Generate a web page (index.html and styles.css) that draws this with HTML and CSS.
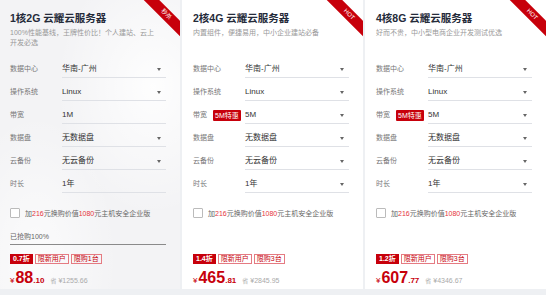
FILE: index.html
```html
<!DOCTYPE html>
<html lang="zh-CN">
<head>
    <meta charset="UTF-8" />
    <meta name="viewport" content="width=device-width, initial-scale=1.0"/>
    <title>云耀云服务器</title>
    <link rel="stylesheet" href="styles.css">
</head>
<body>
    <div class="cards">
        <!-- 1核2G -->
        <div class="card card-first">
            <div class="ribbon">秒杀</div>
            <div class="head">
                <div class="title">1核2G 云耀云服务器</div>
                <div class="sub">100%性能基线，王牌性价比！个人建站、云上开发必选</div>
            </div>
            <div class="rows">
                <div class="row"><span class="label">数据中心</span><span class="field">华南-广州<i class="arrow"></i></span></div>
                <div class="row"><span class="label">操作系统</span><span class="field">Linux<i class="arrow"></i></span></div>
                <div class="row"><span class="label">带宽</span><span class="field">1M</span></div>
                <div class="row"><span class="label">数据盘</span><span class="field">无数据盘<i class="arrow"></i></span></div>
                <div class="row"><span class="label">云备份</span><span class="field">无云备份<i class="arrow"></i></span></div>
                <div class="row"><span class="label">时长</span><span class="field">1年</span></div>
            </div>
            <div class="addon"><span class="check"></span>加<em>216</em>元换购价值<em>1080</em>元主机安全企业版</div>
            <div class="progress">已抢购100%</div>
            <div class="tags">
                <span class="tag tag-off">0.7折</span>
                <span class="tag">限新用户</span>
                <span class="tag">限购1台</span>
            </div>
            <div class="price">
                <span class="yen">¥</span><span class="big">88</span><span class="cents">.10</span>
                <span class="save">省</span><span class="orig">¥1255.66</span>
            </div>
        </div>

        <!-- 2核4G -->
        <div class="card">
            <div class="ribbon">HOT</div>
            <div class="head">
                <div class="title">2核4G 云耀云服务器</div>
                <div class="sub">内置组件，便捷易用，中小企业建站必备</div>
            </div>
            <div class="rows">
                <div class="row"><span class="label">数据中心</span><span class="field">华南-广州<i class="arrow"></i></span></div>
                <div class="row"><span class="label">操作系统</span><span class="field">Linux<i class="arrow"></i></span></div>
                <div class="row"><span class="label">带宽<b class="badge">5M特惠</b></span><span class="field">5M<i class="arrow"></i></span></div>
                <div class="row"><span class="label">数据盘</span><span class="field">无数据盘<i class="arrow"></i></span></div>
                <div class="row"><span class="label">云备份</span><span class="field">无云备份<i class="arrow"></i></span></div>
                <div class="row"><span class="label">时长</span><span class="field">1年<i class="arrow"></i></span></div>
            </div>
            <div class="addon"><span class="check"></span>加<em>216</em>元换购价值<em>1080</em>元主机安全企业版</div>
            <div class="progress empty"></div>
            <div class="tags">
                <span class="tag tag-off">1.4折</span>
                <span class="tag">限新用户</span>
                <span class="tag">限购3台</span>
            </div>
            <div class="price">
                <span class="yen">¥</span><span class="big">465</span><span class="cents">.81</span>
                <span class="save">省</span><span class="orig">¥2845.95</span>
            </div>
        </div>

        <!-- 4核8G -->
        <div class="card">
            <div class="ribbon">HOT</div>
            <div class="head">
                <div class="title">4核8G 云耀云服务器</div>
                <div class="sub">好而不贵，中小型电商企业开发测试优选</div>
            </div>
            <div class="rows">
                <div class="row"><span class="label">数据中心</span><span class="field">华南-广州<i class="arrow"></i></span></div>
                <div class="row"><span class="label">操作系统</span><span class="field">Linux<i class="arrow"></i></span></div>
                <div class="row"><span class="label">带宽<b class="badge">5M特惠</b></span><span class="field">5M<i class="arrow"></i></span></div>
                <div class="row"><span class="label">数据盘</span><span class="field">无数据盘<i class="arrow"></i></span></div>
                <div class="row"><span class="label">云备份</span><span class="field">无云备份<i class="arrow"></i></span></div>
                <div class="row"><span class="label">时长</span><span class="field">1年<i class="arrow"></i></span></div>
            </div>
            <div class="addon"><span class="check"></span>加<em>216</em>元换购价值<em>1080</em>元主机安全企业版</div>
            <div class="progress empty"></div>
            <div class="tags">
                <span class="tag tag-off">1.2折</span>
                <span class="tag">限新用户</span>
                <span class="tag">限购3台</span>
            </div>
            <div class="price">
                <span class="yen">¥</span><span class="big">607</span><span class="cents">.77</span>
                <span class="save">省</span><span class="orig">¥4346.67</span>
            </div>
        </div>
    </div>
</body>
</html>
```

FILE: styles.css
```css
body {
    margin: 0;
    padding: 0;
    font-family: 'Liberation Sans', 'Noto Sans CJK SC', sans-serif;
    background: #eef0f3;
    color: #333;
}

.cards {
    display: flex;
    gap: 2px;
    height: 295px;
}

.card {
    position: relative;
    overflow: hidden;
    flex: 1;
    height: 289px;
    padding: 11px 14px 0 11px;
    box-sizing: border-box;
    background: #fff;
}

.card-first {
    padding-left: 10px;
    background:
        radial-gradient(ellipse at 85% 30%, rgba(255, 255, 255, 0.9), rgba(255, 255, 255, 0) 45%),
        radial-gradient(ellipse at 20% 90%, rgba(255, 255, 255, 0.7), rgba(255, 255, 255, 0) 40%),
        #f3f3f5;
}

.ribbon {
    position: absolute;
    top: 9px;
    right: -16px;
    width: 60px;
    height: 11px;
    line-height: 11px;
    background: #c7000b;
    color: #fff;
    font-size: 6px;
    text-align: center;
    transform: rotate(45deg);
}

.head {
    height: 50px;
}

.title {
    font-size: 10.5px;
    font-weight: bold;
    line-height: 14px;
    color: #252b3a;
}

.sub {
    max-width: 146px;
    margin-top: 3px;
    font-size: 7px;
    line-height: 10px;
    color: #999;
}

.row {
    display: flex;
    align-items: flex-start;
    height: 17px;
    margin-bottom: 6px;
}

.label {
    display: flex;
    align-items: center;
    width: 52px;
    height: 16px;
    flex-shrink: 0;
    font-size: 7px;
    line-height: 16px;
    color: #777;
}

.badge {
    margin-left: 6px;
    padding: 0 2px;
    height: 11px;
    line-height: 11px;
    background: #c7000b;
    color: #fff;
    font-size: 7px;
    font-weight: normal;
    border-radius: 1px;
}

.field {
    position: relative;
    flex: 1;
    height: 16px;
    line-height: 16px;
    font-size: 8px;
    color: #333;
    border-bottom: 1px solid #dfe1e6;
}

.arrow {
    position: absolute;
    right: 5px;
    top: 7px;
    width: 0;
    height: 0;
    border-left: 2px solid transparent;
    border-right: 2px solid transparent;
    border-top: 3px solid #666;
}

.addon {
    display: flex;
    align-items: center;
    height: 20px;
    margin-top: 10px;
    font-size: 7px;
    color: #666;
}

.addon em {
    font-style: normal;
    color: #e5333b;
}

.check {
    width: 8px;
    height: 8px;
    margin-right: 5px;
    border: 1px solid #bbb;
    border-radius: 1px;
    background: #fff;
}

.progress {
    margin-top: 9px;
    line-height: 10px;
    height: 10px;
    padding-bottom: 2px;
    font-size: 7px;
    color: #666;
    border-bottom: 1px solid #8a8a8a;
}

.progress.empty {
    border-bottom-color: transparent;
}

.tags {
    display: flex;
    gap: 2px;
    margin-top: 9px;
}

.tag {
    height: 8px;
    line-height: 8px;
    padding: 0 2px;
    font-size: 7px;
    color: #c7000b;
    border: 1px solid #e57b82;
}

.tag-off {
    background: #c7000b;
    border-color: #c7000b;
    color: #fff;
    font-weight: bold;
}

.price {
    display: flex;
    align-items: baseline;
    margin-top: 4px;
    line-height: 20px;
    color: #c7000b;
}

.yen {
    font-size: 8px;
}

.big {
    margin-left: 1px;
    font-size: 16px;
    font-weight: bold;
}

.cents {
    font-size: 8px;
    font-weight: bold;
}

.save {
    margin-left: 6px;
    font-size: 6px;
    color: #aaa;
}

.orig {
    margin-left: 2px;
    font-size: 7px;
    color: #aaa;
}
```
